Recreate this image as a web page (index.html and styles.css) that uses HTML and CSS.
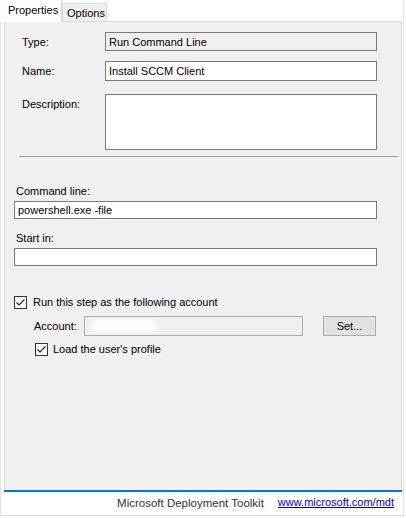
FILE: index.html
```html
<!DOCTYPE html>
<html lang="en">
<head>
  <meta charset="UTF-8">
  <title>Install SCCM Client</title>
  <link rel="stylesheet" href="styles.css">
</head>
<body>
  <div class="window">
    <!-- tabs -->
    <div class="tabs">
      <div class="tab active">Properties</div>
      <div class="tab">Options</div>
    </div>

    <div class="panel">
      <div class="fields">
        <label>Type:</label>
        <div class="box readonly">Run Command Line</div>
        <label>Name:</label>
        <div class="box">Install SCCM Client</div>
        <label class="desc-label">Description:</label>
        <div class="box desc"></div>
      </div>

      <div class="separator"></div>

      <div class="command">
        <label>Command line:</label>
        <div class="box wide">powershell.exe -file<span class="smudge cmd-smudge"></span></div>
        <label class="start-label">Start in:</label>
        <div class="box wide"></div>

        <div class="check-row">
          <span class="checkbox">
            <svg width="11" height="11" viewBox="0 0 11 11"><polyline points="1.5,5.5 4,8 9.5,2.5" fill="none" stroke="#222" stroke-width="1.1"/></svg>
          </span>
          <span>Run this step as the following account</span>
        </div>

        <div class="account-row">
          <label>Account:</label>
          <div class="box account"><span class="smudge acc-smudge"></span></div>
          <button class="btn">Set...</button>
        </div>

        <div class="check-row sub">
          <span class="checkbox">
            <svg width="11" height="11" viewBox="0 0 11 11"><polyline points="1.5,5.5 4,8 9.5,2.5" fill="none" stroke="#222" stroke-width="1.1"/></svg>
          </span>
          <span>Load the user's profile</span>
        </div>
      </div>
    </div>

    <div class="footer">
      <span class="product">Microsoft Deployment Toolkit</span>
      <a href="#" class="link">www.microsoft.com/mdt</a>
    </div>
  </div>
</body>
</html>
```

FILE: styles.css
```css
body {
  margin: 0;
  background-color: #fff;
  font-family: "Liberation Sans", Arial, sans-serif;
  font-size: 11px;
  color: #000;
}
.window {
  width: 402px;
  height: 515px;
  border-left: 1px solid #e3e3e3;
  border-right: 1px solid #e3e3e3;
  border-bottom: 1px solid #dadada;
  background-color: #fff;
}

/* tab strip */
.tabs {
  display: flex;
  align-items: flex-end;
  height: 21px;
  position: relative;
  z-index: 1;
}
.tab {
  box-sizing: border-box;
  height: 18px;
  padding: 2px 0 0 4px;
  width: 45px;
  background-color: #f0f0f0;
  border: 1px solid #d9d9d9;
  border-bottom: none;
  font-size: 11px;
  line-height: 14px;
}
.tab.active {
  height: 22px;
  width: 62px;
  margin-left: -1px;
  padding: 3px 0 0 8px;
  background-color: #fff;
  border-top: none;
  border-left: none;
  margin-bottom: -1px;
}

/* properties page */
.panel {
  box-sizing: border-box;
  margin-left: 3px;
  width: 398px;
  height: 469px;
  background-color: #f0f0f0;
  border: 1px solid #d9d9d9;
  border-bottom: none;
}
.fields {
  display: grid;
  grid-template-columns: 83px 272px;
  row-gap: 10px;
  margin: 10px 0 0 17px;
}
.fields label {
  padding-top: 3px;
  line-height: 14px;
}
.box {
  box-sizing: border-box;
  height: 20px;
  background-color: #fff;
  border: 1px solid #7a7a7a;
  padding: 2px 0 0 3px;
  line-height: 14px;
  position: relative;
  overflow: hidden;
}
.box.readonly {
  height: 19px;
  background-color: #f0f0f0;
}
.box.desc {
  height: 56px;
}
.desc-label,
.box.desc {
  margin-top: 3px;
}
.separator {
  margin: 6px 3px 0 14px;
  border-top: 1px solid #a0a0a0;
}

.command {
  padding-left: 9px;
}
.command > label {
  display: block;
  margin: 27px 0 3px 2px;
  line-height: 14px;
}
.command > label.start-label {
  margin-top: 12px;
}
.box.wide {
  width: 363px;
  height: 18px;
  padding-top: 1px;
}
.smudge {
  position: absolute;
  background-color: #fff;
  filter: blur(2px);
  border-radius: 6px;
}
.cmd-smudge {
  left: 140px;
  top: -3px;
  width: 220px;
  height: 18px;
}
.acc-smudge {
  left: 6px;
  top: 3px;
  width: 66px;
  height: 12px;
}

.check-row {
  display: flex;
  align-items: center;
  margin-top: 29px;
  line-height: 14px;
}
.checkbox {
  box-sizing: border-box;
  width: 13px;
  height: 13px;
  margin-right: 6px;
  border: 1px solid #333;
  background-color: #fff;
  display: flex;
}
.check-row.sub {
  margin-top: 6px;
  padding-left: 21px;
}
.check-row.sub .checkbox {
  margin-right: 5px;
}
.account-row {
  display: flex;
  align-items: center;
  margin-top: 6px;
  padding-left: 20px;
}
.account-row label {
  width: 50px;
}
.box.account {
  width: 219px;
  height: 20px;
  background-color: #f0f0f0;
  border-color: #adadad;
  margin-top: 1px;
}
.btn {
  box-sizing: border-box;
  width: 53px;
  height: 20px;
  margin-left: 20px;
  padding: 0;
  background-color: #e1e1e1;
  border: 1px solid #adadad;
  font-family: "Liberation Sans", Arial, sans-serif;
  font-size: 11px;
  color: #000;
}

/* footer */
.footer {
  box-sizing: border-box;
  margin-left: 3px;
  width: 398px;
  height: 25px;
  border-top: 2px solid #0078d7;
  display: flex;
  justify-content: flex-end;
  padding: 4px 8px 0 0;
}
.product {
  font-size: 11.5px;
  color: #333;
  margin-top: 1px;
  margin-right: 14px;
}
.link {
  color: #0000ee;
  text-decoration: underline;
  font-size: 11px;
}
```
